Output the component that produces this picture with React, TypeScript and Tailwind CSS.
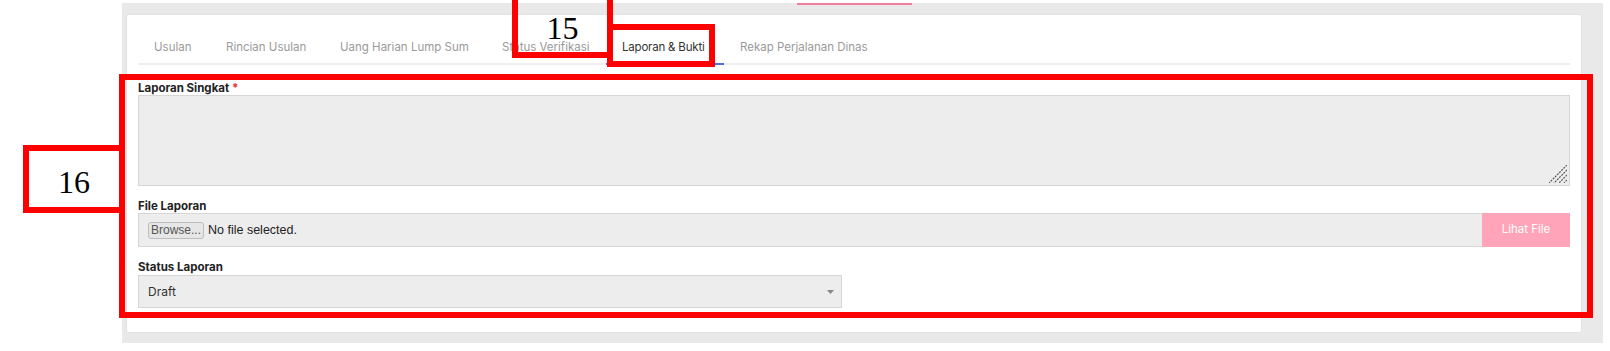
import React from "react";

const tabs = [
  { label: "Usulan", w: "w-[72px]" },
  { label: "Rincian Usulan", w: "w-[114px]" },
  { label: "Uang Harian Lump Sum", w: "w-[162px]" },
  { label: "Status Verifikasi", w: "w-[120px]" },
  { label: "Laporan & Bukti", w: "w-[118px]", active: true },
  { label: "Rekap Perjalanan Dinas", w: "w-[170px]" },
];

export default function App() {
  return (
    <div className="relative w-[1610px] h-[351px] bg-white overflow-hidden font-['Inter','Noto_Sans',sans-serif]">
      {/* page background */}
      <div className="relative ml-[122px] mt-[3px] w-[1481px] h-[340px] bg-[#e9e9e9] pl-[4px] pt-[11px]">
        <div className="absolute left-[675px] top-0 w-[115px] h-[2px] bg-[#f27c9b]" />

        {/* card */}
        <div className="w-[1456px] h-[319px] bg-white rounded-[2px] border border-[#e2e2e2] pt-[17px]">
          {/* Tabs */}
          <div className="ml-[11px] mr-[11px] flex border-b-2 border-[#efefef]">
            {tabs.map((t) => (
              <div
                key={t.label}
                className={`${t.w} h-[33px] -mb-[2px] flex items-center pl-[16px] text-[11.5px] whitespace-nowrap ${
                  t.active
                    ? "text-[#333333] border-b-2 border-[#5470e0] tracking-[-0.2px]"
                    : "text-[#9a9a9a] border-b-2 border-transparent"
                }`}
              >
                {t.label}
              </div>
            ))}
          </div>

          {/* Form */}
          <div className="pl-[11px] pr-[11px] pt-[16px] flex flex-col">
            <label className="h-[14px] leading-[14px] text-[11.5px] font-bold text-[#222]">
              Laporan Singkat <span className="text-[#e53935]">*</span>
            </label>
            <div className="relative w-[1432px] h-[91px]">
              <textarea className="block w-full h-full resize-none bg-[#ededed] border border-[#d6d6d6] outline-none" />
              <svg
                className="absolute right-[3px] bottom-[3px]"
                width="18"
                height="18"
                viewBox="0 0 18 18"
              >
                <g stroke="#5a5a5a" strokeWidth="1.2" strokeDasharray="2 1">
                  <path d="M18 0L0 18" />
                  <path d="M18 5L5 18" />
                  <path d="M18 10L10 18" />
                  <path d="M18 15L15 18" />
                </g>
              </svg>
            </div>

            <label className="mt-[13px] h-[14px] leading-[14px] text-[11.5px] font-bold text-[#222]">
              File Laporan
            </label>
            <div className="flex w-[1432px] h-[34px]">
              <div className="flex-1 flex items-center bg-[#ededed] border border-[#d6d6d6] border-r-0 pl-[9px]">
                <span className="h-[17px] px-[2px] flex items-center rounded-[3px] border border-[#bdbdbd] bg-[#e6e6e6] text-[12px] text-[#555] font-['Liberation_Sans',sans-serif]">
                  Browse...
                </span>
                <span className="ml-[4px] text-[12.5px] text-[#222] font-['Liberation_Sans',sans-serif]">
                  No file selected.
                </span>
              </div>
              <div className="w-[88px] flex items-center justify-center bg-[#ffa4b9] text-white text-[11.5px]">
                Lihat File
              </div>
            </div>

            <label className="mt-[13px] h-[14px] leading-[14px] text-[11.5px] font-bold text-[#222]">
              Status Laporan
            </label>
            <div className="mt-[1px] w-[704px] h-[33px] flex items-center justify-between bg-[#ededed] border border-[#d6d6d6] pl-[9px] pr-[7px]">
              <span className="text-[12px] text-[#333]">Draft</span>
              <svg width="7" height="4" viewBox="0 0 7 4">
                <path d="M0 0h7L3.5 4z" fill="#888" />
              </svg>
            </div>
          </div>
        </div>
      </div>

      {/* annotations */}
      <div className="absolute left-[512px] top-[-10px] w-[101px] h-[68px] border-[6px] border-[#ff0000] flex items-center justify-center pt-[8px]">
        <span className="font-['Liberation_Serif',serif] text-[32px] leading-none text-black">15</span>
      </div>
      <div className="absolute left-[607px] top-[24px] w-[108px] h-[43px] border-[6px] border-[#ff0000]" />
      <div className="absolute left-[119px] top-[74px] w-[1474px] h-[244px] border-[6px] border-[#ff0000]" />
      <div className="absolute left-[23px] top-[145px] w-[102px] h-[68px] border-[6px] border-[#ff0000] flex items-center justify-center pt-[6px]">
        <span className="font-['Liberation_Serif',serif] text-[32px] leading-none text-black">16</span>
      </div>
    </div>
  );
}
